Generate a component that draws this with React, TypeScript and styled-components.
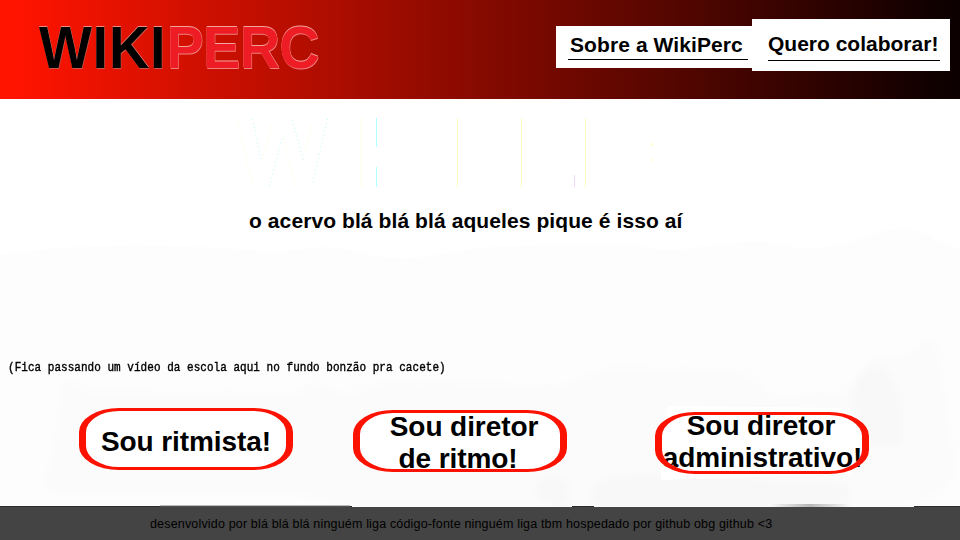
import React from "react";
import styled, { createGlobalStyle } from "styled-components";

const GlobalStyle = createGlobalStyle`
  * { box-sizing: border-box; }
  html, body { margin: 0; padding: 0; background: #fff; }
  body { font-family: "Liberation Sans", Arial, sans-serif; color: #000; overflow: hidden; }
`;

const Page = styled.div`
  width: 960px;
  height: 540px;
  display: flex;
  flex-direction: column;
  overflow: hidden;
`;

const Header = styled.header`
  height: 99px;
  flex: none;
  display: flex;
  justify-content: space-between;
  align-items: flex-start;
  padding: 19px 10px 0 39px;
  background: linear-gradient(90deg, #ff1400 0, #ff1400 16px, #100000 935px, #0c0000 100%);
`;

const Logo = styled.h1`
  margin: 0;
  font-size: 56px;
  line-height: 57px;
  font-weight: 700;
  letter-spacing: 0.75px;
  white-space: nowrap;
  transform: scaleY(1.05);
  text-shadow: 0 -0.7px 0 #ee8c80, 0.5px 0.5px 0 #c65a50;
`;

const LogoAccent = styled.span`
  color: #ee1c25;
  letter-spacing: -0.75px;
  text-shadow: 0 -0.8px 0 #f3a49c, 0.5px 0.5px 0 #ee8080;
`;

const Nav = styled.nav`
  display: flex;
  align-items: flex-start;
`;

const NavItem = styled.a<{ $wide?: boolean }>`
  display: block;
  background: #fff;
  width: ${(p) => (p.$wide ? 198 : 196)}px;
  height: ${(p) => (p.$wide ? 52 : 42)}px;
  margin-top: ${(p) => (p.$wide ? 0 : 7)}px;
  padding: ${(p) => (p.$wide ? "13px 10px 0 16px" : "7px 4px 0 12px")};
`;

const NavLabel = styled.span<{ $wide?: boolean }>`
  display: block;
  height: ${(p) => (p.$wide ? 29 : 27)}px;
  padding-left: ${(p) => (p.$wide ? 0 : 2)}px;
  border-bottom: 1px solid #000;
  font-size: 21px;
  line-height: 24px;
  font-weight: 700;
  letter-spacing: ${(p) => (p.$wide ? 0 : 0.09)}px;
  white-space: nowrap;
`;

const Hero = styled.main`
  position: relative;
  isolation: isolate;
  height: 408px;
  flex: none;
  display: flex;
  flex-direction: column;
`;

const Backdrop = styled.svg`
  position: absolute;
  inset: 0;
  z-index: -1;
`;

const Tagline = styled.p`
  margin: 110px 0 0 249px;
  font-size: 21px;
  line-height: 24px;
  font-weight: 700;
  letter-spacing: 0.09px;
  white-space: nowrap;
`;

const VideoNote = styled.p`
  margin: 127px 0 0 8px;
  font-family: "Liberation Mono", monospace;
  font-size: 11px;
  line-height: 16px;
  letter-spacing: 0.03px;
  -webkit-text-stroke: 0.35px #000;
  transform: scaleY(1.1);
  white-space: pre;
`;

const Choices = styled.div`
  display: flex;
  align-items: flex-start;
  padding: 33px 0 0 79px;
`;

const Choice = styled.button<{ $drop: number; $gap: number }>`
  position: relative;
  width: 214px;
  height: 62px;
  flex: none;
  margin: ${(p) => p.$drop}px ${(p) => p.$gap}px 0 0;
  padding: 0;
  border: 0;
  display: flex;
  flex-direction: column;
  align-items: center;
  background: #fff;
  border-radius: 40px / 24px;
  color: #000;
  font: 700 28px/32px "Liberation Sans", Arial, sans-serif;

  &::after {
    content: "";
    position: absolute;
    inset: 0;
    border: solid #fb1200;
    border-width: 3px 7px;
    border-radius: 40px / 24px;
  }
`;

const Line = styled.span<{ $shift?: number; $top?: number }>`
  display: block;
  flex: none;
  white-space: nowrap;
  letter-spacing: -0.08px;
  margin: ${(p) => p.$top ?? 0}px 0 0 ${(p) => p.$shift ?? 0}px;
`;

const Footer = styled.footer`
  height: 33px;
  flex: none;
  padding: 9px 0 0 150px;
  background: #444;
  font-size: 12.5px;
  line-height: 16px;
  letter-spacing: 0.17px;
  white-space: nowrap;
`;

export default function App() {
  return (
    <Page>
      <GlobalStyle />
      <Header>
        <Logo>WIKI<LogoAccent>PERC</LogoAccent></Logo>
        <Nav>
          <NavItem><NavLabel>Sobre a WikiPerc</NavLabel></NavItem>
          <NavItem $wide><NavLabel $wide>Quero colaborar!</NavLabel></NavItem>
        </Nav>
      </Header>
      <Hero>
        <Backdrop width="960" height="408" viewBox="0 99 960 408" aria-hidden="true">
          <defs>
            <linearGradient id="smudge">
              <stop offset="0" stopColor="#b8b8b8" stopOpacity="0" />
              <stop offset="0.5" stopColor="#b8b8b8" />
              <stop offset="1" stopColor="#b8b8b8" stopOpacity="0" />
            </linearGradient>
            <filter id="haze" x="-10%" y="-10%" width="120%" height="120%">
              <feGaussianBlur stdDeviation="4" />
            </filter>
          </defs>
          <path fill="#fdfdfd" d="M0 255C60 246 120 244 180 246S270 255 310 248 370 266 430 256 490 246 560 245H640Q660 254 700 247Q770 236 800 249Q840 248 880 232Q915 222 935 240L960 249V507H0Z" />
          <g filter="url(#haze)">
            <path fill="#fbfbfb" d="M60 386Q75 376 85 392L300 394Q310 376 330 390L355 396Q360 384 390 382L560 386 610 368 730 370Q765 380 765 396L850 394Q860 360 890 356Q915 358 920 345Q930 330 938 350L956 470Q948 498 900 507H350L300 495H60Q40 490 48 470Q60 430 60 386Z" />
            <path fill="#f8f8f8" d="M850 395Q862 356 888 372Q908 400 900 446H868ZM535 490Q540 474 552 476L568 481V507H545ZM592 490Q602 474 620 476L650 474 720 476 850 484V507H592Z" />
          </g>
          <path fill="#fff" d="M668 406L850 408V474L661 480L660 440Z" />
          <path fill="url(#smudge)" d="M770 504H850V507H770Z" />
          <path fill="#2d2d2d" d="M0 506H352V507H0ZM572 506H594V507H572ZM914 506H960V507H914Z" />
          <path fill="#777" d="M160 505.500H350V506.500H160Z" />
          <g fill="none" strokeWidth="1">
            <path stroke="#fbfbd0" strokeDasharray="1 3" d="M237.500 120L252.500 186M273.500 119L261.500 162M283.500 138L295.500 187M313.500 119L302.500 162" />
            <path stroke="#b8fafa" strokeDasharray="1 3" d="M252.500 119L261.500 162M269.500 186L282.500 137M292.500 120L303.500 162M327.500 119L312.500 184" />
            <path stroke="#fefee4" d="M361.500 118V187" />
            <path stroke="#fcfcc4" d="M457.500 118V187M521.500 118V187M585.500 118V187" />
            <path stroke="#b2ffff" d="M376.500 118V147M376.500 167V187" />
            <path stroke="#f2d8ff" d="M574.500 175V187" />
            <path stroke="#ffffaa" d="M652.500 143V146M652.500 159V161" />
          </g>
        </Backdrop>
        <Tagline>o acervo blá blá blá aqueles pique é isso aí</Tagline>
        <VideoNote>(Fica passando um vídeo da escola aqui no fundo bonzão pra cacete)</VideoNote>
        <Choices>
          <Choice $drop={-1} $gap={60}><Line $top={18}>Sou ritmista!</Line></Choice>
          <Choice $drop={1} $gap={88}>
            <Line $shift={8} $top={1}>Sou diretor</Line>
            <Line $shift={-4}>de ritmo!</Line>
          </Choice>
          <Choice $drop={3} $gap={0}>
            <Line $top={-2} $shift={-2}>Sou diretor</Line>
            <Line $shift={1}>administrativo!</Line>
          </Choice>
        </Choices>
      </Hero>
      <Footer>desenvolvido por blá blá blá ninguém liga código-fonte ninguém liga tbm hospedado por github obg github &lt;3</Footer>
    </Page>
  );
}
